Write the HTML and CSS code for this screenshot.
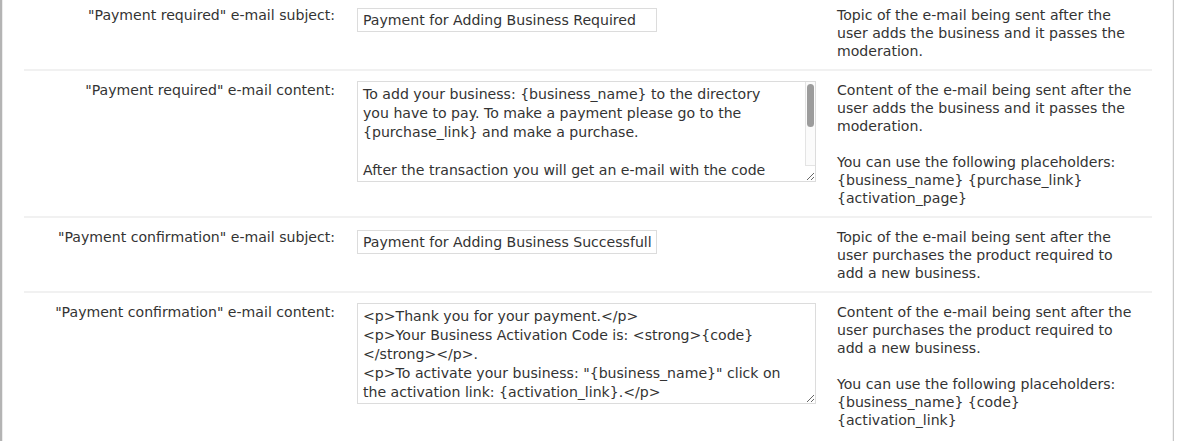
FILE: index.html
```html
<!DOCTYPE html>
<html lang="en">
<head>
<meta charset="utf-8">
<title>E-mail settings</title>
<link rel="stylesheet" href="styles.css">
</head>
<body>
<div class="page">
  <div class="form">
    <div class="row">
      <div class="label">"Payment required" e-mail subject:</div>
      <div class="field"><input class="text" type="text" value="Payment for Adding Business Required"></div>
      <div class="desc">Topic of the e-mail being sent after the user adds the business and it passes the moderation.</div>
    </div>
    <div class="row">
      <div class="label">"Payment required" e-mail content:</div>
      <div class="field">
        <div class="area-wrap">
          <textarea class="area">To add your business: {business_name} to the directory
you have to pay. To make a payment please go to the
{purchase_link} and make a purchase.

After the transaction you will get an e-mail with the code
that you can use to activate your business on the
{activation_page}.

Thank you.
</textarea>
          <div class="vscroll"><div class="thumb"></div></div>
        </div>
      </div>
      <div class="desc">Content of the e-mail being sent after the user adds the business and it passes the moderation.<br><br>You can use the following placeholders: {business_name} {purchase_link} {activation_page}</div>
    </div>
    <div class="row">
      <div class="label">"Payment confirmation" e-mail subject:</div>
      <div class="field"><input class="text" type="text" value="Payment for Adding Business Successfull"></div>
      <div class="desc">Topic of the e-mail being sent after the user purchases the product required to add a new business.</div>
    </div>
    <div class="row last">
      <div class="label">"Payment confirmation" e-mail content:</div>
      <div class="field"><textarea class="area">&lt;p&gt;Thank you for your payment.&lt;/p&gt;
&lt;p&gt;Your Business Activation Code is: &lt;strong&gt;{code}
&lt;/strong&gt;&lt;/p&gt;.
&lt;p&gt;To activate your business: "{business_name}" click on
the activation link: {activation_link}.&lt;/p&gt;</textarea></div>
      <div class="desc">Content of the e-mail being sent after the user purchases the product required to add a new business.<br><br>You can use the following placeholders: {business_name} {code} {activation_link}</div>
    </div>
  </div>
</div>
</body>
</html>
```

FILE: styles.css
```css
html, body {
  margin: 0;
  padding: 0;
  background: #ffffff;
}

body {
  font-family: "DejaVu Sans", Verdana, sans-serif;
  font-size: 14.1px;
  color: #333333;
  overflow: hidden;
}

.page {
  width: 1171px;
  height: 441px;
  border-left: 2px solid #b4b4b4;
  border-right: 1px solid #c8c8c8;
  box-shadow: inset 1px 0 0 #ececec, inset -1px 0 0 #f2f2f2;
  overflow: hidden;
}

.form {
  margin: -4px 0 0 22px;
  width: 1128px;
}

.row {
  display: grid;
  grid-template-columns: 333px 479px 1fr;
  padding: 10px 0 9px;
  border-bottom: 2px solid #f1f1f1;
  line-height: 18px;
}

.row.last {
  border-bottom: 0;
  padding-bottom: 12px;
}

.label {
  text-align: right;
  padding-right: 22px;
  white-space: nowrap;
}

.desc {
  padding-left: 1px;
  width: 300px;
}

.text {
  box-sizing: border-box;
  display: block;
  width: 300px;
  height: 24px;
  margin: 2px 0 0;
  padding: 0 5px;
  border: 1px solid #dcdcdc;
  font-family: "DejaVu Sans", Verdana, sans-serif;
  font-size: 14.1px;
  color: #333333;
  background: #ffffff;
  outline: none;
}

.area-wrap {
  position: relative;
  width: 459px;
}

.area {
  box-sizing: border-box;
  display: block;
  width: 459px;
  height: 101px;
  margin: 0;
  padding: 3px 4px 2px 5px;
  border: 1px solid #dcdcdc;
  font-family: "DejaVu Sans", Verdana, sans-serif;
  font-size: 14.1px;
  line-height: 19px;
  color: #333333;
  background: #ffffff;
  resize: both;
  outline: none;
  overflow: hidden;
}

.vscroll {
  position: absolute;
  top: 1px;
  right: 1px;
  width: 10px;
  height: 84px;
  box-sizing: border-box;
  background: #fbfbfb;
  border-left: 1px solid #e4e4e4;
  border-bottom: 1px solid #e4e4e4;
}

.thumb {
  margin: 2px 0 0 1px;
  width: 7px;
  height: 43px;
  border-radius: 4px;
  background: #9c9c9c;
}
```
